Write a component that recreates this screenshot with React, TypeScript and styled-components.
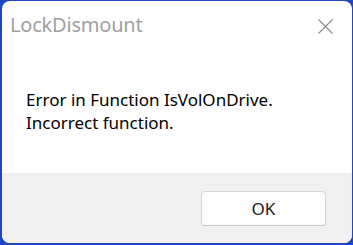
import * as React from 'react'
import styled, { createGlobalStyle } from 'styled-components'

const GlobalStyle = createGlobalStyle`
  html, body {
    margin: 0;
    padding: 0;
    background: #1f47c0;
  }
  body {
    padding: 1px 1px 2px 2px;
    font-family: 'Noto Sans', 'Open Sans', 'Liberation Sans', sans-serif;
  }
`

const Window = styled.div`
  width: 350px;
  height: 242px;
  background: #ffffff;
  border-radius: 8px;
  overflow: hidden;
  display: flex;
  flex-direction: column;
`

const TitleBar = styled.div`
  height: 46px;
  display: flex;
  align-items: center;
  justify-content: space-between;
  padding: 0 19px 0 8px;
  flex-shrink: 0;
`

const Title = styled.span`
  font-size: 20px;
  color: #a0a0a0;
  letter-spacing: -0.2px;
`

const CloseButton = styled.button`
  border: none;
  background: transparent;
  padding: 0;
  margin-top: 4px;
  width: 16px;
  height: 16px;
  display: flex;
  align-items: center;
  justify-content: center;
`

const Body = styled.div`
  flex: 1;
  padding: 41px 0 0 24px;
`

const Message = styled.p`
  margin: 0;
  font-size: 17px;
  line-height: 23px;
  color: #000000;
`

const Footer = styled.div`
  height: 70px;
  background: #f0f0f0;
  display: flex;
  align-items: flex-start;
  justify-content: flex-end;
  padding: 18px 26px 0 0;
  box-sizing: border-box;
  flex-shrink: 0;
`

const Button = styled.button`
  width: 125px;
  height: 35px;
  background: #fdfdfd;
  border: 1px solid #d6d6d6;
  border-bottom-color: #c2c2c2;
  border-radius: 4px;
  font-family: inherit;
  font-size: 17px;
  color: #1a1a1a;
  padding: 0;
`

export default function App() {
  return (
    <>
      <GlobalStyle />
      <Window>
        <TitleBar>
          <Title>LockDismount</Title>
          <CloseButton aria-label='Close'>
            <svg width='15' height='15' viewBox='0 0 15 15'>
              <path d='M0.5 0.5 L14.5 14.5 M14.5 0.5 L0.5 14.5' stroke='#8a8a8a' strokeWidth='1.1' />
            </svg>
          </CloseButton>
        </TitleBar>
        <Body>
          <Message>
            Error in Function IsVolOnDrive.
            <br />
            Incorrect function.
          </Message>
        </Body>
        <Footer>
          <Button>OK</Button>
        </Footer>
      </Window>
    </>
  )
}
